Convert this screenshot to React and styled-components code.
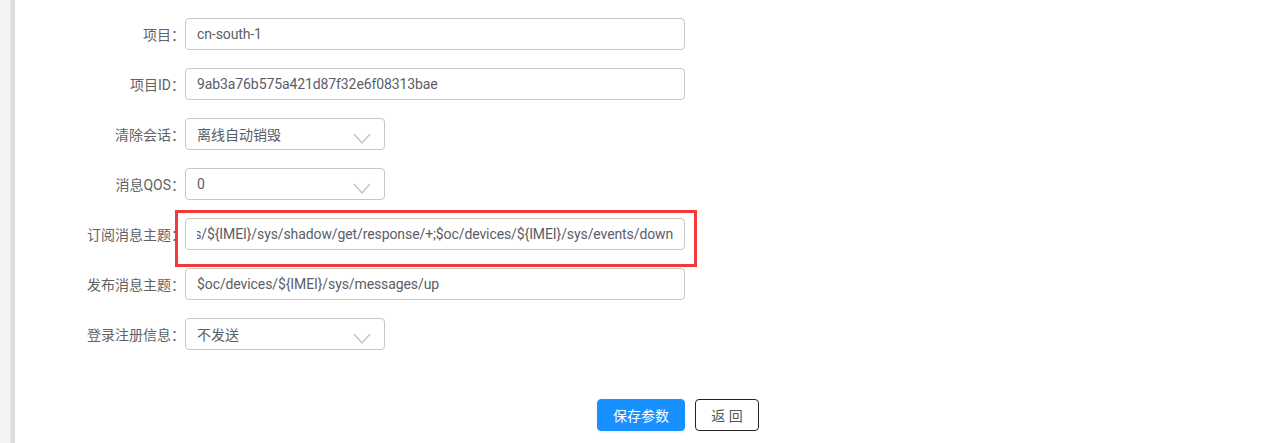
import React from 'react'
import styled, { createGlobalStyle } from 'styled-components'

const GlobalStyle = createGlobalStyle`
  html, body {
    margin: 0;
    padding: 0;
    background: #ffffff;
  }
  body {
    font-family: Roboto, "Noto Sans CJK SC", sans-serif;
  }
`

const Page = styled.div`
  display: flex;
  min-height: 443px;
`

const SideStrip = styled.div`
  width: 11px;
  flex-shrink: 0;
  background: #f4f4f4;
  border-right: 4px solid #dcdcde;
  box-shadow: inset -1px 0 0 #e9e9eb;
`

const Main = styled.div`
  flex: 1;
  padding-top: 18px;
`

const Row = styled.div`
  display: flex;
  align-items: center;
  height: 32px;
  margin-bottom: 18px;
`

const Label = styled.label`
  width: 170px;
  text-align: right;
  font-size: 14px;
  color: #606266;
  white-space: nowrap;

  &::after {
    content: '：';
  }
`

const Field = styled.div`
  position: relative;
  width: ${(p) => p.$width}px;
  height: 32px;
`

const TextInput = styled.input`
  box-sizing: border-box;
  width: 100%;
  height: 32px;
  padding: 0 11px;
  border: 1px solid #c6c6c6;
  border-radius: 4px;
  font-family: Roboto, "Noto Sans CJK SC", sans-serif;
  font-size: 14px;
  letter-spacing: -0.1px;
  color: #5a5e66;
  background: #fff;
  outline: none;
`

const SelectBox = styled.div`
  box-sizing: border-box;
  display: flex;
  align-items: center;
  justify-content: space-between;
  width: 100%;
  height: 32px;
  padding: 0 13px 0 11px;
  border: 1px solid #c6c6c6;
  border-radius: 4px;
  font-size: 14px;
  color: #5a5e66;
`

const Chevron = styled.svg`
  width: 18px;
  height: 11px;
  margin-top: 9px;
`

const Highlight = styled.div`
  position: absolute;
  left: -10px;
  top: -8px;
  right: -12px;
  bottom: -17px;
  border: 3px solid #f23a3a;
  pointer-events: none;
`

const Actions = styled.div`
  display: flex;
  gap: 10px;
  margin-top: 49px;
  padding-left: 582px;
`

const Button = styled.button`
  box-sizing: border-box;
  height: 32px;
  width: ${(p) => p.$width}px;
  border-radius: 4px;
  font-family: Roboto, "Noto Sans CJK SC", sans-serif;
  font-size: 14px;
  cursor: pointer;
  border: 1px solid ${(p) => (p.$primary ? '#1890ff' : '#222')};
  background: ${(p) => (p.$primary ? '#1890ff' : '#fff')};
  color: ${(p) => (p.$primary ? '#fff' : '#555')};
  box-shadow: ${(p) => (p.$primary ? '0 2px 2px rgba(0,0,0,0.05)' : 'none')};
`

const Select = ({ value }) => (
  <Field $width={200}>
    <SelectBox>
      <span>{value}</span>
      <Chevron viewBox="0 0 18 11">
        <path d="M1 1 L9 10 L17 1" fill="none" stroke="#c0c0c0" strokeWidth="1.2" />
      </Chevron>
    </SelectBox>
  </Field>
)

const ScrolledInput = ({ value }) => {
  const ref = React.useRef(null)
  React.useEffect(() => {
    if (ref.current) ref.current.scrollLeft = ref.current.scrollWidth
  }, [])
  return <TextInput ref={ref} defaultValue={value} />
}

export default function App() {
  return (
    <>
      <GlobalStyle />
      <Page>
        <SideStrip />
        <Main>
          <Row>
            <Label>项目</Label>
            <Field $width={500}>
              <TextInput defaultValue="cn-south-1" />
            </Field>
          </Row>
          <Row>
            <Label>项目ID</Label>
            <Field $width={500}>
              <TextInput defaultValue="9ab3a76b575a421d87f32e6f08313bae" />
            </Field>
          </Row>
          <Row>
            <Label>清除会话</Label>
            <Select value="离线自动销毁" />
          </Row>
          <Row>
            <Label>消息QOS</Label>
            <Select value="0" />
          </Row>
          <Row>
            <Label>订阅消息主题</Label>
            <Field $width={500}>
              <ScrolledInput value="$oc/devices/${IMEI}/sys/shadow/get/response/+;$oc/devices/${IMEI}/sys/events/down" />
              <Highlight />
            </Field>
          </Row>
          <Row>
            <Label>发布消息主题</Label>
            <Field $width={500}>
              <TextInput defaultValue="$oc/devices/${IMEI}/sys/messages/up" />
            </Field>
          </Row>
          <Row>
            <Label>登录注册信息</Label>
            <Select value="不发送" />
          </Row>
          <Actions>
            <Button $primary $width={88}>保存参数</Button>
            <Button $width={64}>返 回</Button>
          </Actions>
        </Main>
      </Page>
    </>
  )
}
